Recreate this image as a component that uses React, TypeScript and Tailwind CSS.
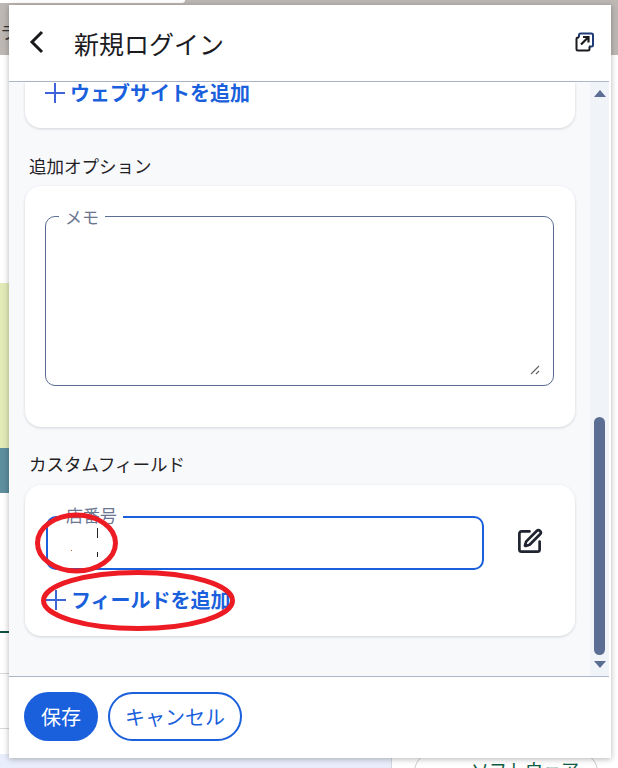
import { SquarePen } from "lucide-react";

const font = "font-['Noto_Sans_CJK_JP','Noto_Sans',sans-serif]";

function AddRow({ label, className }: { label: string; className?: string }) {
  return (
    <div className={`flex items-center gap-[5px] text-[20px] leading-[24px] font-semibold text-[#1a5fdc] ${className ?? ""}`}>
      <svg className="h-[20px] w-[20px]" viewBox="0 0 20 20" stroke="#3f63d8" strokeWidth="2">
        <path d="M0 10H20M10 0V20" />
      </svg>
      <span>{label}</span>
    </div>
  );
}

function PageBehind() {
  return (
    <div className="absolute inset-0 bg-white">
      <div className="h-[55px] bg-[#bdb8b4]" />
      <div className="absolute left-0 top-0 h-[3px] w-[185px] rounded-br-[12px] bg-white" />
      <div className="absolute left-0 top-[20px] text-[17px] leading-[24px] text-[#333]">ラ</div>
      <div className="absolute left-0 top-[283px] h-[165px] w-[9px] bg-[#e2ebb8]" />
      <div className="absolute left-0 top-[448px] h-[45px] w-[9px] bg-[#5d8f9f]" />
      <div className="absolute left-0 top-[631px] h-[2px] w-[9px] bg-[#0f5040]" />
      <div className="absolute left-0 top-[673px] h-px w-[9px] bg-[#d8d8d8]" />
      <div className="absolute left-0 top-[728px] h-px w-[9px] bg-[#d8d8d8]" />
      <div className="absolute bottom-0 left-0 top-[754px] w-[392px] border-r border-[#d4d7de] bg-[#e8eefb]" />
      <div className="absolute left-[414px] top-[752px] h-[40px] w-[184px] rounded-full border border-[#c9ccd0] bg-white pl-[56px] pt-[4px] text-[18px] leading-[24px] text-[#0f5c46]">
        ソフトウェア
      </div>
    </div>
  );
}

function Scrollbar() {
  return (
    <div className="flex w-[19px] shrink-0 flex-col items-center bg-[#f0f4f8] py-[8px]">
      <div className="h-0 w-0 border-x-[6.5px] border-b-[7px] border-x-transparent border-b-[#5b6d92]" />
      <div className="mt-[320px] w-[11px] flex-1 rounded-full bg-[#5b6d92]" />
      <div className="mt-[6px] h-0 w-0 border-x-[6.5px] border-t-[7px] border-x-transparent border-t-[#5b6d92]" />
    </div>
  );
}

export default function App() {
  return (
    <div className={`relative h-[768px] w-[618px] overflow-hidden ${font}`}>
      <PageBehind />

      <div className="absolute left-[9px] top-[5px] h-[753px] w-[602px] bg-white pr-[2px] shadow-[0_1px_6px_rgba(0,0,0,0.3)]">
        <div className="flex h-full flex-col">
          {/* ヘッダー */}
          <div className="flex h-[77px] shrink-0 items-center border-b border-[#aeb6cc] pl-[8px] pr-[14px] text-[#1b1b1f]">
            <svg className="-mt-[2px] h-[40px] w-[40px]" viewBox="0 0 40 40" fill="none" stroke="currentColor" strokeWidth="3">
              <path d="M25 10 15 20 25 30" />
            </svg>
            <h1 className="ml-[17px] text-[25px] font-normal leading-[32px]">新規ログイン</h1>
            <svg className="-mt-[2px] ml-auto h-[20px] w-[20px]" viewBox="0 0 20 20" fill="none" stroke="currentColor" strokeWidth="2">
              <path d="M4 5.500V3a1.500 1.500 0 0 1 1.500-1.500h11A1.500 1.500 0 0 1 18 3v10a1.500 1.500 0 0 1-1.500 1.500H14" stroke="#1f3c78" />
              <path d="M4 5.500H3a1.500 1.500 0 0 0-1.500 1.500v10A1.500 1.500 0 0 0 3 18.500h10a1.500 1.500 0 0 0 1.500-1.500v-2.500" />
              <path d="M6 12.500 13 5.500M8 5H13.500V10.500" strokeWidth="2.200" />
            </svg>
          </div>

          {/* 本体 */}
          <div className="flex min-h-0 flex-1 bg-[#f8f9fb]">
            <div className="min-w-0 flex-1 pl-[16px] pr-[15px]">
              <div className="flex h-[46px] items-start rounded-b-[16px] bg-white pl-[20px] shadow-[0_1px_3px_rgba(60,64,90,0.2)]">
                <AddRow label="ウェブサイトを追加" className="-mt-[1px]" />
              </div>

              <h2 className="mb-[7px] ml-[4px] mt-[25px] text-[17.5px] font-normal leading-[26px] text-[#1f2125]">追加オプション</h2>
              <div className="h-[241px] rounded-[16px] bg-white pl-[20px] pr-[21px] pt-[30px] shadow-[0_1px_3px_rgba(60,64,90,0.2)]">
                <div className="relative h-[170px] rounded-[10px] border border-[#5b6d92]">
                  <span className="absolute -top-[11px] left-[13px] bg-white px-[6px] text-[17px] leading-[22px] text-[#6a7690]">メモ</span>
                  <svg className="absolute bottom-[10px] right-[13px] h-[10px] w-[10px]" viewBox="0 0 10 10" stroke="#666" strokeWidth="1.2">
                    <path d="M1 9 9 1M6 9 9 6" />
                  </svg>
                </div>
              </div>

              <h2 className="mb-[8px] ml-[4px] mt-[24px] text-[17.5px] font-normal leading-[26px] text-[#1f2125]">カスタムフィールド</h2>
              <div className="h-[151px] rounded-[16px] bg-white pl-[21px] pt-[31px] shadow-[0_1px_3px_rgba(60,64,90,0.2)]">
                <div className="flex items-center">
                  <div className="relative h-[54px] w-[438px] rounded-[10px] border-2 border-[#1a5fdc]">
                    <span className="absolute -top-[14px] left-[12px] bg-white px-[6px] text-[17px] leading-[22px] text-[#6a7690]">店番号</span>
                    <div className="absolute left-[49px] top-[10px] h-[10px] w-px bg-[#222]" />
                    <div className="absolute left-[49px] top-[34px] h-[5px] w-px bg-[#222]" />
                    <div className="absolute left-[23px] top-[32px] h-px w-px bg-[#a06a20]" />
                  </div>
                  <SquarePen className="-mt-[4px] ml-[32px] h-[27px] w-[27px] text-[#1f2430]" strokeWidth={2.4} />
                </div>
                <AddRow label="フィールドを追加" className="mt-[18px]" />
              </div>
            </div>
            <Scrollbar />
          </div>

          {/* フッター */}
          <div className="flex h-[82px] shrink-0 items-start gap-[10px] border-t border-[#aeb6cc] pl-[15px] pt-[15px] text-[20px]">
            <button className="h-[49px] rounded-full bg-[#1a5fdc] px-[17px] text-white">保存</button>
            <button className="h-[49px] rounded-full border-2 border-[#1a5fdc] bg-white px-[15px] text-[#1a5fdc]">キャンセル</button>
          </div>
        </div>
      </div>

      {/* 赤い丸囲み */}
      <svg className="pointer-events-none absolute left-0 top-0 h-[768px] w-[618px]" viewBox="0 0 618 768" fill="none" stroke="#ed1c24" strokeWidth="5">
        <ellipse cx="76.500" cy="543" rx="39" ry="28" />
        <ellipse cx="138" cy="600.500" rx="94.500" ry="28" />
      </svg>
    </div>
  );
}
